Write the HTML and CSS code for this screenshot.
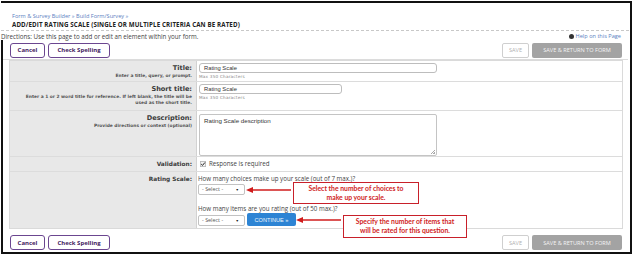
FILE: index.html
```html
<!DOCTYPE html>
<html>
<head>
<meta charset="utf-8">
<link rel="stylesheet" href="styles.css">
</head>
<body>
<div class="frame">
  <div class="header">
    <div class="crumbs">Form &amp; Survey Builder » Build Form/Survey »</div>
    <div class="page-title">ADD/EDIT RATING SCALE (SINGLE OR MULTIPLE CRITERIA CAN BE RATED)</div>
  </div>
  <div class="directions-row">
    <div class="directions">Directions: Use this page to add or edit an element within your form.</div>
    <div class="help"><span class="help-icon"></span>Help on this Page</div>
  </div>
  <div class="main">
    <div class="actions">
      <div class="left-actions">
        <button class="btn-purple">Cancel</button>
        <button class="btn-purple">Check Spelling</button>
      </div>
      <div class="right-actions">
        <button class="btn-save">SAVE</button>
        <button class="btn-return">SAVE &amp; RETURN TO FORM</button>
      </div>
    </div>
    <div class="form-table">
      <div class="row row-title">
        <div class="label">
          <div class="label-main">Title:</div>
          <div class="label-sub">Enter a title, query, or prompt.</div>
        </div>
        <div class="field">
          <div class="input input-long">Rating Scale</div>
          <div class="hint">Max 350 Characters</div>
        </div>
      </div>
      <div class="row row-short">
        <div class="label">
          <div class="label-main">Short title:</div>
          <div class="label-sub">Enter a 1 or 2 word title for reference. If left blank, the title will be used as the short title.</div>
        </div>
        <div class="field">
          <div class="input input-short">Rating Scale</div>
          <div class="hint">Max 350 Characters</div>
        </div>
      </div>
      <div class="row row-desc">
        <div class="label">
          <div class="label-main">Description:</div>
          <div class="label-sub">Provide directions or context (optional)</div>
        </div>
        <div class="field">
          <div class="textarea">Rating Scale description<span class="grip"></span></div>
        </div>
      </div>
      <div class="row row-valid">
        <div class="label">
          <div class="label-main small">Validation:</div>
        </div>
        <div class="field field-valid">
          <svg class="checkbox" width="6" height="6" viewBox="0 0 6 6"><rect x="0.25" y="0.25" width="5.5" height="5.5" rx="0.6" fill="#f2f2f2" stroke="#666" stroke-width="0.5"/><path d="M1.2 3.1L2.5 4.4L4.9 1.5" fill="none" stroke="#222" stroke-width="1"/></svg>
          <span class="text">Response is required</span>
        </div>
      </div>
      <div class="row row-rating">
        <div class="label">
          <div class="label-main small">Rating Scale:</div>
        </div>
        <div class="field field-rating">
          <div class="text">How many choices make up your scale (out of 7 max.)?</div>
          <div class="select">- Select -<span class="caret">▼</span></div>
          <div class="text q2">How many items are you rating (out of 50 max.)?</div>
          <div class="line">
            <div class="select">- Select -<span class="caret">▼</span></div>
            <button class="btn-continue">CONTINUE »</button>
          </div>
          <svg class="arrow arrow1" width="46" height="8" viewBox="0 0 46 8"><path d="M4 4H45" stroke="#d01c1c" stroke-width="1.4"/><path d="M0 4L7 1V7Z" fill="#d01c1c"/></svg>
          <div class="note note1">Select the number of choices to<br>make up your scale.</div>
          <svg class="arrow arrow2" width="46" height="8" viewBox="0 0 46 8"><path d="M4 4H45" stroke="#d01c1c" stroke-width="1.4"/><path d="M0 4L7 1V7Z" fill="#d01c1c"/></svg>
          <div class="note note2">Specify the number of items that<br>will be rated for this question.</div>
        </div>
      </div>
    </div>
    <div class="actions actions-bottom">
      <div class="left-actions">
        <button class="btn-purple">Cancel</button>
        <button class="btn-purple">Check Spelling</button>
      </div>
      <div class="right-actions">
        <button class="btn-save">SAVE</button>
        <button class="btn-return">SAVE &amp; RETURN TO FORM</button>
      </div>
    </div>
  </div>
</div>
</body>
</html>
```
FILE: styles.css
```css
* { box-sizing: border-box; }
body {
  margin: 0;
  background: #ffffff;
  font-family: "Open Sans", "DejaVu Sans", sans-serif;
  color: #333;
}
.frame {
  margin: 1px 2px 0 1px;
  width: 631px;
  height: 253px;
  border-top: 2px solid #111;
  border-right: 2px solid #111;
  border-bottom: 2px solid #111;
  display: flex;
  flex-direction: column;
}
.header {
  padding: 9px 0 0 11px;
  border-bottom: 1px dashed #c8c8c8;
  height: 28px;
  margin-right: 1px;
}
.crumbs {
  font-size: 5.6px;
  line-height: 8px;
  color: #5b7fbf;
}
.page-title {
  font-size: 6.2px;
  line-height: 9px;
  font-weight: 700;
  color: #222;
  letter-spacing: 0.12px;
}
.directions-row {
  display: flex;
  justify-content: space-between;
  align-items: center;
  height: 8px;
  margin-top: 1px;
}
.directions {
  font-size: 6.2px;
  color: #444;
  padding-left: 0;
}
.help {
  font-size: 5.6px;
  color: #5b7fbf;
  display: flex;
  align-items: center;
  gap: 2px;
  padding-right: 9px;
}
.help-icon {
  width: 5px;
  height: 5px;
  border-radius: 50%;
  background: #333;
}
.main {
  border-left: 2px solid #111;
  flex: 1;
  padding: 0 6px 0 6px;
  display: flex;
  flex-direction: column;
}
.actions {
  display: flex;
  justify-content: space-between;
  align-items: center;
  height: 20px;
  border-bottom: 1px solid #dcdcdc;
  margin: 0 -4px 0 -6px;
  padding: 1px 6px 0 7px;
}
.left-actions, .right-actions {
  display: flex;
  gap: 3px;
}
button {
  font-family: inherit;
  margin: 0;
  cursor: pointer;
}
.btn-purple {
  height: 15px;
  border: 1px solid #6b4690;
  border-radius: 3px;
  background: #fff;
  color: #3f2160;
  font-weight: 700;
  font-size: 6px;
  padding: 0 6px;
}
.btn-purple:first-child { width: 35px; }
.btn-purple:last-child { width: 62px; }
.btn-save {
  height: 15px;
  width: 27px;
  border: 1px solid #cfcfcf;
  border-radius: 2px;
  background: #fff;
  color: #b0b0b0;
  font-size: 5.6px;
  padding: 0;
}
.btn-return {
  height: 15px;
  width: 90px;
  border: none;
  border-radius: 2px;
  background: #a3a3a3;
  color: #f4f4f4;
  font-size: 5.6px;
  padding: 0;
}
.form-table {
  border: 1px solid #dadada;
  margin-top: 0;
  width: 614px;
}
.row {
  display: grid;
  grid-template-columns: 187px 1fr;
  border-bottom: 1px solid #dcdcdc;
}
.row:last-child { border-bottom: none; }
.label {
  background: #e8e8e8;
  border-right: 1px solid #d2d2d2;
  text-align: right;
  padding: 3px 4px 0 4px;
  font-family: "DejaVu Sans", sans-serif;
  color: #444;
}
.label-main {
  font-size: 6.6px;
  font-weight: 700;
  line-height: 9px;
  color: #3a3a3a;
}
.label-main.small {
  font-size: 5.8px;
  line-height: 8px;
}
.label-sub {
  font-size: 4.4px;
  font-weight: 700;
  line-height: 6px;
  color: #555;
}
.field {
  padding: 2px 0 0 2px;
  position: relative;
  font-family: "Liberation Sans", Arial, sans-serif;
}
.input {
  height: 10px;
  border: 1px solid #bdbdbd;
  border-radius: 3px;
  font-size: 5.8px;
  line-height: 8px;
  padding-left: 4px;
  color: #333;
}
.input-long { width: 238px; }
.input-short { width: 143px; }
.hint {
  font-family: "DejaVu Sans", sans-serif;
  font-size: 4.2px;
  color: #888;
  line-height: 8px;
  letter-spacing: 0.2px;
}
.row-title { height: 21px; }
.row-short { height: 29px; }
.row-desc { height: 46px; }
.row-valid { height: 15px; }
.row-rating { height: 56px; }
.row-desc .field { padding-top: 3px; }
.textarea {
  width: 238px;
  height: 42px;
  border: 1px solid #c4c4c4;
  border-radius: 2px;
  font-size: 6.2px;
  line-height: 9px;
  padding: 1px 4px;
  color: #333;
  position: relative;
}
.grip {
  position: absolute;
  right: 1px;
  bottom: 1px;
  width: 4px;
  height: 4px;
  background: linear-gradient(135deg, transparent 45%, #aaa 45%, #aaa 55%, transparent 55%, transparent 75%, #aaa 75%);
}
.field-valid {
  display: flex;
  align-items: center;
  gap: 3px;
  padding-top: 0;
  padding-left: 3px;
}
.checkbox { flex: none; }
.text {
  font-family: "Open Sans", sans-serif;
  font-size: 6.2px;
  line-height: 8px;
  color: #444;
}
.field-rating { padding-top: 3px; padding-left: 1px; }
.select {
  width: 47px;
  height: 11px;
  border: 1px solid #c2c2c2;
  border-radius: 2px;
  font-family: "Open Sans", sans-serif;
  font-size: 5.4px;
  line-height: 9px;
  padding-left: 3px;
  color: #555;
  position: relative;
  margin-top: 1px;
}
.caret {
  position: absolute;
  right: 5px;
  top: 0;
  font-size: 3.5px;
  color: #222;
}
.q2 { margin-top: 10px; }
.line {
  display: flex;
  align-items: center;
  gap: 2px;
}
.btn-continue {
  height: 13px;
  width: 49px;
  border: none;
  border-radius: 2px;
  background: #2d84d4;
  color: #f0f6fc;
  font-size: 5.6px;
  padding: 0;
  margin-top: 0;
}
.arrow { position: absolute; }
.arrow1 { left: 49px; top: 14px; }
.arrow2 { left: 99px; top: 44px; }
.note {
  position: absolute;
  background: #fff;
  border: 1px solid #c8202a;
  color: #d01c1c;
  font-family: "Lato", sans-serif;
  font-weight: 700;
  font-size: 6.8px;
  line-height: 9px;
  text-align: center;
  padding-top: 1px;
}
.note1 { left: 96px; top: 10px; width: 126px; height: 22px; }
.note2 { left: 146px; top: 43px; width: 124px; height: 23px; }
.actions-bottom {
  border-bottom: none;
  margin-top: 5px;
  height: 16px;
}
```
